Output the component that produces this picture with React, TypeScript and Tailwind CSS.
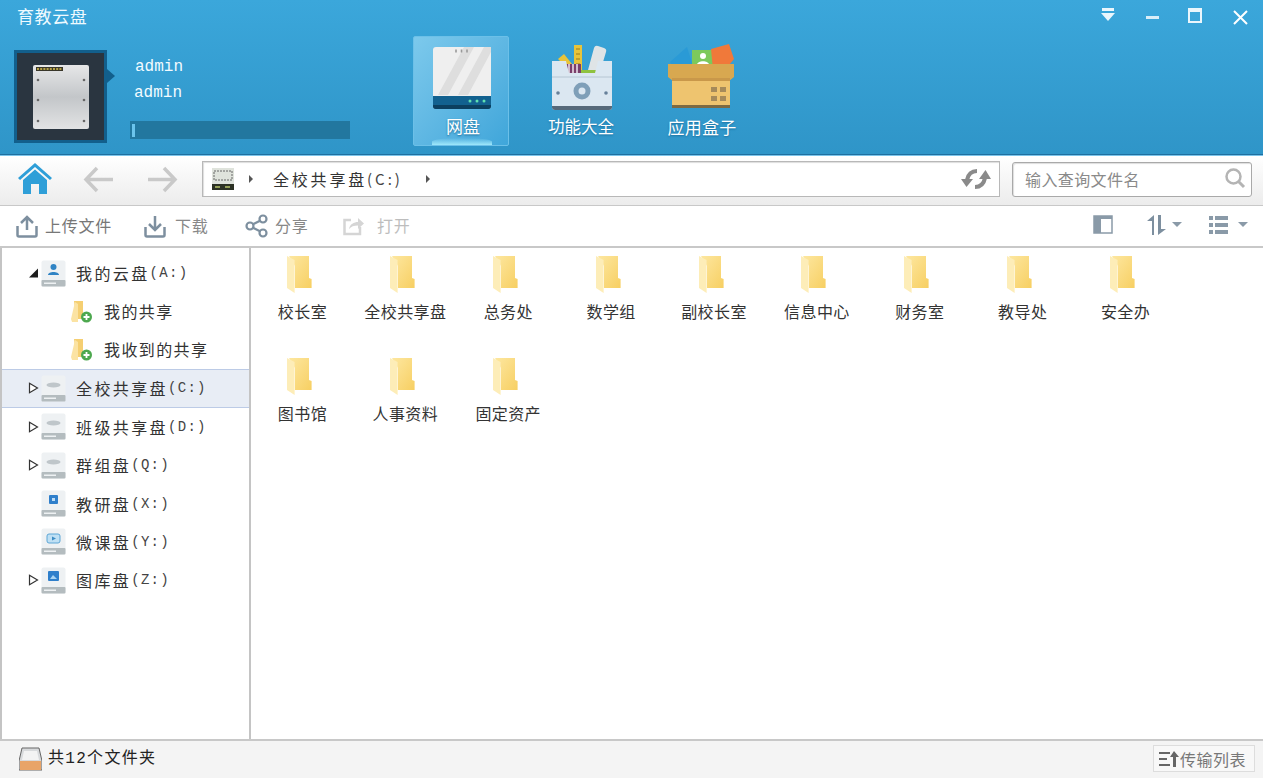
import React from "react";

const CJK = "font-['Noto_Sans_CJK_SC','Liberation_Sans',sans-serif]";
const MONO = "font-['Liberation_Mono','Noto_Sans_CJK_SC',monospace]";

const FOLDERS = ["校长室", "全校共享盘", "总务处", "数学组", "副校长室", "信息中心", "财务室", "教导处", "安全办", "图书馆", "人事资料", "固定资产"];

function Folder() {
  return (
    <svg width="25" height="37" viewBox="0 0 25 37">
      <defs>
        <linearGradient id="fb" x1="0" y1="0" x2="1" y2="1">
          <stop offset="0" stopColor="#fde7a0" />
          <stop offset="1" stopColor="#f7cf62" />
        </linearGradient>
      </defs>
      <path d="M2 0H22V22L24.6 23V32H8V10Z" fill="url(#fb)" />
      <path d="M0 0L7.6 4V37L0 32Z" fill="#fdedb8" />
    </svg>
  );
}

function SmallFolder() {
  return (
    <svg width="22" height="24" viewBox="0 0 22 24">
      <path d="M3 1H12V14H17V19H5Z" fill="#f5cf72" />
      <path d="M0 19L4 2L7 4V22L1 22Z" fill="#fbe3a3" />
      <circle cx="15.5" cy="17" r="5.5" fill="#4da84f" />
      <path d="M12.5 17H18.5M15.5 14V20" stroke="#fff" strokeWidth="1.8" />
    </svg>
  );
}

function Drive({ kind }: { kind: "user" | "disc" | "blue" | "video" | "photo" }) {
  return (
    <svg width="25" height="27" viewBox="0 0 25 27">
      <rect x="0.5" y="0.5" width="24" height="26" rx="2" fill="#eef1f3" />
      <rect x="0.5" y="20" width="24" height="6.5" rx="1" fill="#b4bcbf" />
      <rect x="3" y="22.5" width="12" height="1.5" fill="#eef1f3" />
      {kind === "user" && (
        <g fill="#2f83c4">
          <circle cx="12.5" cy="7" r="3" />
          <path d="M7 15C7 11 18 11 18 15Z" />
        </g>
      )}
      {kind === "disc" && <ellipse cx="12.5" cy="10" rx="7" ry="2.5" fill="#bfc6ca" />}
      {kind === "blue" && (
        <g>
          <rect x="8" y="5" width="9" height="9" rx="1" fill="#2f7fcb" />
          <rect x="11" y="8" width="3" height="3" fill="#bcdcf6" />
        </g>
      )}
      {kind === "video" && (
        <g>
          <rect x="6" y="6" width="13" height="9" rx="2" fill="#bfe0f4" stroke="#5da6d6" />
          <path d="M11 8.5L15 10.5L11 12.5Z" fill="#3d8cc4" />
        </g>
      )}
      {kind === "photo" && (
        <g>
          <rect x="7" y="4" width="11" height="10" rx="1" fill="#2f7fcb" />
          <path d="M9 12L12 8L16 12Z" fill="#a9d4f3" />
        </g>
      )}
    </svg>
  );
}

function Expander({ open }: { open?: boolean }) {
  return (
    <svg width="11" height="12" viewBox="0 0 11 12">
      {open ? <path d="M1 10.5H10V1.5Z" fill="#1d1d1d" /> : <path d="M1.5 1.2L9.5 6L1.5 10.8Z" fill="#fff" stroke="#333" strokeWidth="1.2" />}
    </svg>
  );
}

function TreeRow({ name, letter, kind, expander, open, selected }: { name: string; letter: string; kind: "user" | "disc" | "blue" | "video" | "photo"; expander?: boolean; open?: boolean; selected?: boolean }) {
  return (
    <div className={`flex h-[38.4px] items-center pl-[26px] ${selected ? "border-y border-[#bccbe6] bg-[#e8edf5]" : ""}`}>
      <div className="w-[13px]">{expander && <Expander open={open} />}</div>
      <Drive kind={kind} />
      <span className={`ml-[10px] text-[16px] tracking-[2.4px] text-[#333] ${CJK}`}>{name}</span>
      <span className={`pt-[1px] text-[14px] tracking-[1.3px] text-[#444] ${MONO}`}>{letter}</span>
    </div>
  );
}

function ChildRow({ label }: { label: string }) {
  return (
    <div className="flex h-[38.4px] items-center pl-[69px]">
      <SmallFolder />
      <span className={`ml-[11px] pb-[2px] text-[16px] tracking-[1.4px] text-[#333] ${CJK}`}>{label}</span>
    </div>
  );
}

function DiskArt() {
  return (
    <svg width="56" height="64" viewBox="0 0 56 64">
      <defs>
        <linearGradient id="dk" x1="0" y1="0" x2="0" y2="1">
          <stop offset="0" stopColor="#e6e7e8" />
          <stop offset="0.5" stopColor="#c3c6c9" />
          <stop offset="1" stopColor="#e2e3e4" />
        </linearGradient>
      </defs>
      <rect width="56" height="64" rx="2" fill="url(#dk)" />
      <rect x="3" y="2" width="27" height="4" fill="#39372a" />
      <path d="M4 4H29" stroke="#e0c850" strokeWidth="1.4" strokeDasharray="2 1.2" />
      <g fill="#666">
        <circle cx="5" cy="15" r="1.3" /><circle cx="51" cy="15" r="1.3" />
        <circle cx="5" cy="35" r="1.3" /><circle cx="51" cy="35" r="1.3" />
        <circle cx="5" cy="56" r="1.3" /><circle cx="51" cy="56" r="1.3" />
      </g>
    </svg>
  );
}

function NasIcon() {
  return (
    <svg width="60" height="64" viewBox="0 0 60 64">
      <rect x="1" y="1" width="58" height="62" rx="3" fill="#efefef" />
      <path d="M6 49L32 1H42L16 49ZM26 49L52 1H59V6L36 49Z" fill="#dedede" />
      <path d="M24 3.5V6.5M29.500 3.500V6.500M35 3.500V6.500" stroke="#999" strokeWidth="1.6" />
      <path d="M1 50H59V60A3 3 0 0 1 56 63H4A3 3 0 0 1 1 60Z" fill="#12618f" />
      <path d="M1 59H59V60A3 3 0 0 1 56 63H4A3 3 0 0 1 1 60Z" fill="#0b3f5f" />
      <g fill="#5fe0b0"><circle cx="38" cy="55" r="1.5" /><circle cx="45" cy="55" r="1.500" /><circle cx="52" cy="55" r="1.500" /></g>
    </svg>
  );
}

function ToolboxIcon() {
  return (
    <svg width="62" height="66" viewBox="0 0 62 66">
      <path d="M7 14L13 9L25 24H17Z" fill="#e8c43a" />
      <rect x="23" y="0" width="8" height="26" fill="#e8c43a" />
      <path d="M25 4H29M25 9H29M25 14H29M25 19H29" stroke="#9a7b1d" />
      <path d="M37 25L43 3Q44 0 47 1L53 3Q56 4 55 7L49 27Z" fill="#dfe4e6" />
      <rect x="15" y="19" width="15" height="11" fill="#7a3f6b" />
      <path d="M18 19V30M22 19V30M26 19V30" stroke="#f0e8ee" strokeWidth="1.500" />
      <rect x="30" y="25" width="15" height="5" fill="#8fc23f" />
      <path d="M1 16H15L18 28H44L47 16H61V62A3 3 0 0 1 58 65H4A3 3 0 0 1 1 62Z" fill="#dbe7f1" />
      <path d="M1 32H61" stroke="#b6c6d3" />
      <path d="M1 61H61V62A3 3 0 0 1 58 65H4A3 3 0 0 1 1 62Z" fill="#56697a" />
      <circle cx="31" cy="46" r="8.500" fill="#7f9fb8" />
      <circle cx="31" cy="46" r="3.500" fill="#dbe7f1" />
      <circle cx="7" cy="48" r="1.800" fill="#66809a" /><circle cx="55" cy="48" r="1.800" fill="#66809a" />
    </svg>
  );
}

function BoxIcon() {
  return (
    <svg width="68" height="66" viewBox="0 0 68 66">
      <path d="M3 18L20 3L26 22H6Z" fill="#2a9ad6" />
      <rect x="25" y="6" width="23" height="20" fill="#7cc95c" />
      <circle cx="36" cy="12" r="3" fill="#fff" />
      <path d="M30 21C30 16 42 16 42 21Z" fill="#fff" />
      <path d="M44 5L62 0L67 15L58 26H46Z" fill="#f0793a" />
      <path d="M1 20H67V33L62 37H6L1 33Z" fill="#d8a850" />
      <rect x="5" y="34" width="58" height="29" fill="#eec46f" />
      <rect x="5" y="34" width="58" height="3" fill="#c9984a" />
      <rect x="5" y="61" width="58" height="3" fill="#7d6a42" />
      <path d="M44 43H50V48H44ZM53 43H59V48H53ZM44 52H50V57H44ZM53 52H59V57H53Z" fill="#a58a5a" />
    </svg>
  );
}

function Toolbtn({ icon, label, tone, width }: { icon: React.ReactNode; label: string; tone: string; width: string }) {
  return (
    <div className={`flex items-center ${width}`}>
      {icon}
      <span className={`pb-[2px] text-[16px] leading-none tracking-[0.75px] ${tone} ${CJK}`}>{label}</span>
    </div>
  );
}

export default function App() {
  return (
    <div className={`flex h-[778px] w-[1263px] flex-col overflow-hidden bg-white ${CJK}`}>
      {/* top blue band */}
      <header className="h-[155px] shrink-0 border-b border-[#1f6f9f] bg-linear-to-b from-[#3ba7db] to-[#2f95c8]">
        <div className="flex h-[36px] items-center justify-between pb-[4px] pl-[17px] pr-[1px]">
          <span className="text-[17px] tracking-[0.6px] text-[#eefaff]">育教云盘</span>
          <div className="flex">
            <div className="flex w-[44px] justify-center">
              <svg width="14" height="14" viewBox="0 0 14 14"><path d="M1 0H13V3H1ZM0 5H14L7 13Z" fill="#eaf6fc" /></svg>
            </div>
            <div className="flex w-[44px] justify-center pt-[8px]">
              <div className="h-[3px] w-[13px] bg-[#d9eef8]" />
            </div>
            <div className="flex w-[44px] justify-center pr-[2px]">
              <div className="h-[15px] w-[14px] border-2 border-t-[4px] border-[#eaf6fc]" />
            </div>
            <div className="flex w-[44px] justify-center pt-[2px]">
              <svg width="15" height="15" viewBox="0 0 15 15"><path d="M1 1L14 14M14 1L1 14" stroke="#fff" strokeWidth="2" /></svg>
            </div>
          </div>
        </div>
        <div className="flex items-start pl-[14px]">
          <div className="relative mt-[14px] flex h-[93px] w-[93px] items-center justify-center border-[3px] border-[#125f8c] bg-[#2a3540]">
            <DiskArt />
            <div className="absolute left-[90px] top-[16px] h-0 w-0 border-y-[7px] border-l-[8px] border-y-transparent border-l-[#125f8c]" />
          </div>
          <div className={`ml-[23px] mt-[18px] w-[220px] text-[16px] leading-[26px] text-[#f2fbff] ${MONO}`}>
            <div className="pl-[5px]">admin</div>
            <div className="pl-[4px]">admin</div>
            <div className="mt-[15px] flex h-[18px] items-center bg-[#22779f] pl-[2px]">
              <div className="h-[13px] w-[3px] bg-[#6cc4ec]" />
            </div>
          </div>
          <nav className="ml-[63px] flex gap-6">
            <div className="relative flex h-[110px] w-[96px] flex-col items-center rounded-[2px] border border-[#6cc0e8] bg-linear-to-br from-[#7cc9ec] to-[#3fa6da] pl-[2px] pt-[9px]">
              <NasIcon />
              <span className="mt-[3px] pl-[2px] text-[17px] text-white [text-shadow:0_1px_2px_#1a6e9c]">网盘</span>
              <div className="absolute bottom-0 left-[18px] h-[7px] w-[60px] rounded-t-[50%] bg-linear-to-t from-[#9fe8fb] to-transparent" />
            </div>
            <div className="flex h-[110px] w-[96px] flex-col items-center pl-[2px] pt-[9px]">
              <ToolboxIcon />
              <span className="mt-[3px] whitespace-nowrap pr-[2px] text-[16.500px] text-white [text-shadow:0_1px_2px_#1a6e9c]">功能大全</span>
            </div>
            <div className="flex h-[110px] w-[96px] flex-col items-center pt-[8px]">
              <BoxIcon />
              <span className="mt-[4px] whitespace-nowrap pl-[2px] text-[17px] tracking-[0.3px] text-white [text-shadow:0_1px_2px_#1a6e9c]">应用盒子</span>
            </div>
          </nav>
        </div>
      </header>

      {/* address row */}
      <div className="flex h-[51px] shrink-0 items-center border-y border-t-[#7cc4ea] border-b-[#c8c8c8] bg-linear-to-b from-white to-[#ececec] pb-[3px] pl-[18px]">
        <svg width="34" height="32" viewBox="0 0 34 32">
          <path d="M17 0L34 15L32 17L17 4L2 17L0 15Z" fill="#2f9fd8" />
          <path d="M5 17L17 6.500L29 17V31H21V21H13V31H5Z" fill="#2f9fd8" />
        </svg>
        <svg className="ml-[31px]" width="31" height="27" viewBox="0 0 31 27">
          <path d="M14 2L3 13.500L14 25M3 13.500H30" fill="none" stroke="#c9c9c9" strokeWidth="3.500" />
        </svg>
        <svg className="ml-[33px]" width="31" height="27" viewBox="0 0 31 27">
          <path d="M17 2L28 13.500L17 25M28 13.500H1" fill="none" stroke="#c9c9c9" strokeWidth="3.500" />
        </svg>
        <div className="ml-[24px] flex h-[36px] w-[798px] items-center border border-[#b8b8b8] bg-white pl-[9px] shadow-[inset_1px_1px_1px_#ddd]">
          <svg width="22" height="22" viewBox="0 0 22 22">
            <rect width="22" height="22" fill="#dfe3dc" />
            <rect x="2" y="3" width="18" height="9" fill="none" stroke="#666" strokeDasharray="2 1" />
            <rect y="16" width="22" height="6" fill="#2c3124" />
            <path d="M3 19H8M13 19H18" stroke="#b5c36a" strokeWidth="1.500" />
          </svg>
          <span className="ml-[15px] h-0 w-0 border-y-[4px] border-l-[4px] border-y-transparent border-l-[#555]" />
          <span className={`ml-[20px] text-[16px] tracking-[2.8px] text-[#333] ${CJK}`}>全校共享盘</span>
          <span className={`text-[15px] tracking-[3px] text-[#444] ${CJK}`}>(C:)</span>
          <span className="ml-[23px] h-0 w-0 border-y-[4px] border-l-[4px] border-y-transparent border-l-[#555]" />
          <svg className="ml-auto mr-[8px]" width="30" height="26" viewBox="0 0 30 26">
            <path d="M16 5C10 5 7 9 6 14" fill="none" stroke="#8a8a8a" strokeWidth="4" />
            <path d="M0 13H12L5.500 21Z" fill="#8a8a8a" />
            <path d="M14 21C20 21 23 17 24 12" fill="none" stroke="#8a8a8a" strokeWidth="4" />
            <path d="M18 13H30L24.500 4Z" fill="#8a8a8a" />
          </svg>
        </div>
        <div className="ml-[12px] flex h-[35px] w-[240px] items-center justify-between rounded-[3px] border border-[#a9a9a9] bg-white pl-[12px] pr-[5px] shadow-[inset_1px_1px_1px_#ddd]">
          <span className="pb-[1px] text-[16px] tracking-[0.4px] text-[#8a8a8a]">输入查询文件名</span>
          <svg className="mb-[3px]" width="22" height="22" viewBox="0 0 22 22">
            <circle cx="9.500" cy="9.500" r="7" fill="none" stroke="#b4b4b4" strokeWidth="2.500" />
            <path d="M14.500 14.500L20 20" stroke="#b4b4b4" strokeWidth="3" />
          </svg>
        </div>
      </div>

      {/* action toolbar */}
      <div className="flex h-[42px] shrink-0 items-center border-b-2 border-[#c8c8c8] pl-[16px] pr-[15px]">
        <Toolbtn
          width="w-[128px]"
          tone="text-[#777]"
          label="上传文件"
          icon={
            <svg className="mr-[7px]" width="22" height="24" viewBox="0 0 22 24" fill="none" stroke="#7d8f9f" strokeWidth="2.500">
              <path d="M11 16V4M5 9L11 3L17 9" />
              <path d="M1.500 12V21A1.500 1.500 0 0 0 3 22.500H19A1.500 1.500 0 0 0 20.500 21V12" />
            </svg>
          }
        />
        <Toolbtn
          width="w-[101px]"
          tone="text-[#888]"
          label="下载"
          icon={
            <svg className="mr-[9px]" width="22" height="24" viewBox="0 0 22 24" fill="none" stroke="#7d8f9f" strokeWidth="2.500">
              <path d="M11 2V15M5 10L11 16L17 10" />
              <path d="M1.500 13V21A1.500 1.500 0 0 0 3 22.500H19A1.500 1.500 0 0 0 20.500 21V13" />
            </svg>
          }
        />
        <Toolbtn
          width="w-[98px]"
          tone="text-[#888]"
          label="分享"
          icon={
            <svg className="mr-[7px]" width="23" height="24" viewBox="0 0 23 24" fill="none" stroke="#7d8f9f" strokeWidth="2.200">
              <circle cx="18" cy="5" r="3.500" />
              <circle cx="5" cy="12" r="3.500" />
              <circle cx="18" cy="19" r="3.500" />
              <path d="M8 10.300L15 6.700M8 13.700L15 17.300" />
            </svg>
          }
        />
        <Toolbtn
          width="w-[80px]"
          tone="text-[#bdbdbd]"
          label="打开"
          icon={
            <svg className="mr-[12px]" width="22" height="20" viewBox="0 0 22 20" fill="none" stroke="#d5d5d5" strokeWidth="2.500">
              <path d="M8 4H1.500V18H17V11" />
              <path d="M6 13C7 8 11 6 15 6V2L21 7.500L15 13V9.500C11 9.500 8 10.500 6 13Z" fill="#d5d5d5" stroke="none" />
            </svg>
          }
        />
        <div className="ml-auto flex items-center pb-[3px]">
          <svg width="20" height="19" viewBox="0 0 20 19">
            <rect x="1" y="1" width="18" height="17" fill="none" stroke="#8a9aa8" strokeWidth="1.500" />
            <rect x="1" y="1" width="18" height="3" fill="#8a9aa8" />
            <rect x="1" y="4" width="7" height="14" fill="#8a9aa8" />
          </svg>
          <svg className="ml-[33px]" width="22" height="20" viewBox="0 0 22 20">
            <path d="M6 20V6H1L8 0V20ZM12 0H15V14H20L12 20Z" fill="#7d8f9f" />
          </svg>
          <span className="ml-[4px] h-0 w-0 border-x-[5px] border-t-[5px] border-x-transparent border-t-[#8a9aa8]" />
          <svg className="ml-[27px]" width="19" height="18" viewBox="0 0 19 18" fill="#8a9aa8">
            <rect y="0" width="4" height="4" /><rect x="6" y="0" width="13" height="4" />
            <rect y="7" width="4" height="4" /><rect x="6" y="7" width="13" height="4" />
            <rect y="14" width="4" height="4" /><rect x="6" y="14" width="13" height="4" />
          </svg>
          <span className="ml-[10px] h-0 w-0 border-x-[5px] border-t-[5px] border-x-transparent border-t-[#8a9aa8]" />
        </div>
      </div>

      {/* tree + file grid */}
      <div className="flex min-h-0 flex-1">
        <aside className="w-[251px] shrink-0 border-x-2 border-l-[#c4c4c4] border-r-[#c4c4c4] pt-[6px]">
          <TreeRow name="我的云盘" letter="(A:)" kind="user" expander open />
          <ChildRow label="我的共享" />
          <ChildRow label="我收到的共享" />
          <TreeRow name="全校共享盘" letter="(C:)" kind="disc" expander selected />
          <TreeRow name="班级共享盘" letter="(D:)" kind="disc" expander />
          <TreeRow name="群组盘" letter="(Q:)" kind="disc" expander />
          <TreeRow name="教研盘" letter="(X:)" kind="blue" />
          <TreeRow name="微课盘" letter="(Y:)" kind="video" />
          <TreeRow name="图库盘" letter="(Z:)" kind="photo" expander />
        </aside>
        <main className="flex flex-1 flex-wrap content-start">
          {FOLDERS.map((name) => (
            <div key={name} className="flex h-[102px] w-[102.9px] flex-col items-center pt-[8px]">
              <div className="mr-[6px]">
                <Folder />
              </div>
              <span className="mt-[6px] whitespace-nowrap text-[16px] tracking-[0.4px] text-[#333]">{name}</span>
            </div>
          ))}
        </main>
      </div>

      {/* status bar */}
      <footer className="flex h-[39px] shrink-0 items-center border-t-2 border-[#c8c8c8] bg-[#f4f4f4] pb-[2px] pl-[19px] pr-[8px]">
        <svg width="23" height="24" viewBox="0 0 23 24">
          <path d="M3 1H20L23 14V23H0V14Z" fill="#d8dadc" stroke="#666" />
          <rect x="1" y="14" width="21" height="9" fill="#e8a468" />
          <path d="M5 4H18L20 13H3Z" fill="#f3f3f3" />
        </svg>
        <span className={`ml-[6px] text-[16px] tracking-[1.3px] text-[#222] ${MONO}`}>共12个文件夹</span>
        <div className="ml-auto flex h-[27px] w-[102px] items-center border border-[#ddd] bg-[#f8f8f8] pl-[5px]">
          <svg width="20" height="16" viewBox="0 0 20 16" fill="#666">
            <rect y="1" width="11" height="2" /><rect y="7" width="8" height="2" /><rect y="13" width="11" height="2" />
            <path d="M15 0L20 6H17V16H14V6H11Z" />
          </svg>
          <span className="ml-[1px] text-[16px] tracking-[0.5px] text-[#777]">传输列表</span>
        </div>
      </footer>
    </div>
  );
}
